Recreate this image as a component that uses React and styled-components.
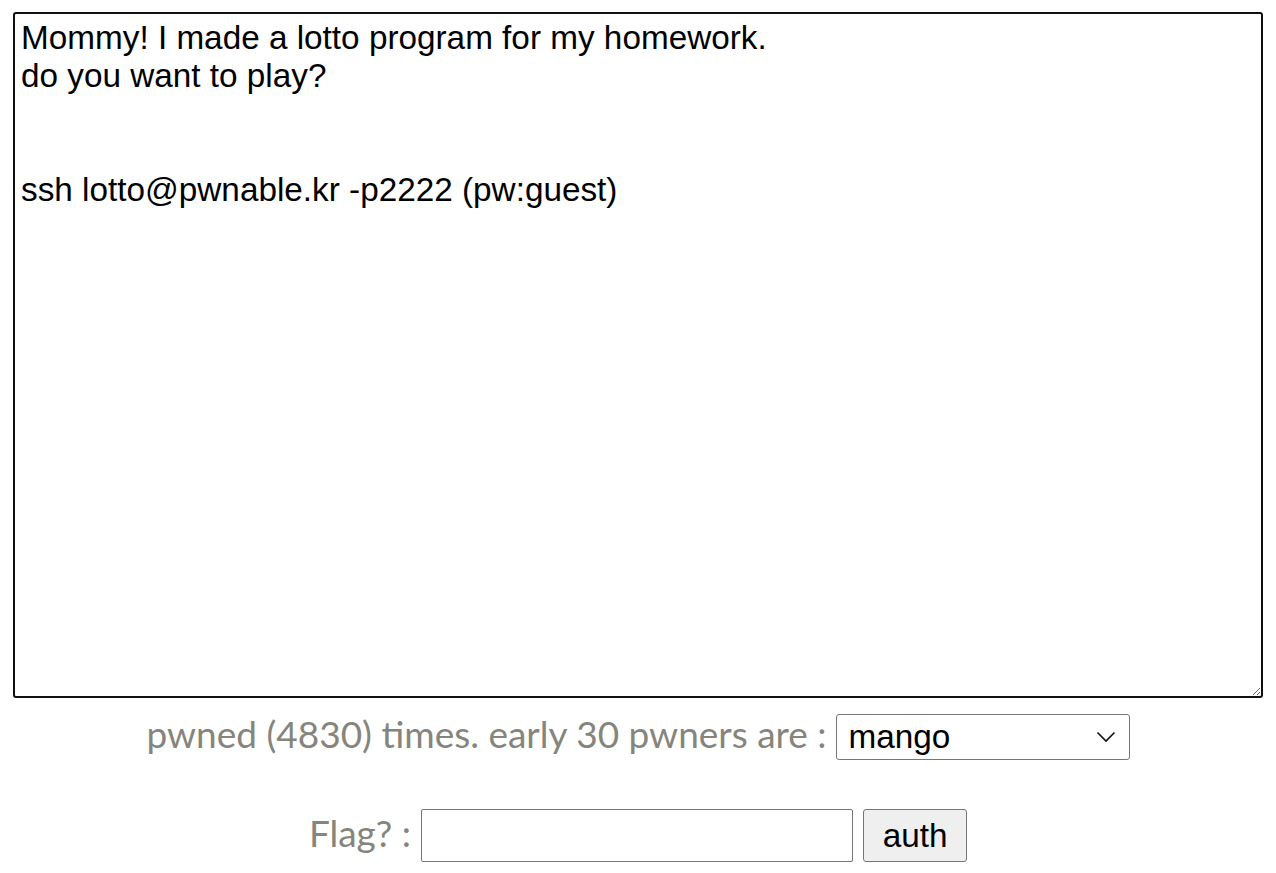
import React from 'react';
import styled, { createGlobalStyle } from 'styled-components';

const GlobalStyle = createGlobalStyle`
  body {
    margin: 0;
    background: #ffffff;
    font-family: "Liberation Sans", Arial, sans-serif;
  }
`;

const Page = styled.div`
  display: flex;
  flex-direction: column;
  align-items: center;
  padding: 12px 13px 0 13px;
`;

const Description = styled.textarea`
  box-sizing: border-box;
  width: 1250px;
  height: 686px;
  margin: 0;
  padding: 5px 6px;
  border: 2px solid #111;
  border-radius: 3px;
  outline: none;
  font-family: "Liberation Sans", Arial, sans-serif;
  font-size: 33.3px;
  line-height: 38px;
  color: #000;
  background: #fff;
`;

const Row = styled.div`
  display: flex;
  align-items: center;
  justify-content: center;
  gap: ${(p) => p.gap || 9}px;
  margin-top: ${(p) => p.top}px;
`;

const Label = styled.span`
  font-family: Lato, "Open Sans", sans-serif;
  font-size: 37px;
  color: #86857c;
  white-space: pre;
  margin-bottom: 6px;
`;

const SelectWrap = styled.div`
  position: relative;
  width: 294px;
  height: 46px;
`;

const Select = styled.select`
  appearance: none;
  box-sizing: border-box;
  width: 100%;
  height: 100%;
  margin: 0;
  padding: 0 40px 0 12px;
  border: 1px solid #767676;
  border-radius: 3px;
  background: #fff;
  font-family: "Liberation Sans", Arial, sans-serif;
  font-size: 33.3px;
  color: #000;
  outline: none;
`;

const Chevron = styled.svg`
  position: absolute;
  right: 14px;
  top: 17px;
  pointer-events: none;
`;

const FlagInput = styled.input`
  box-sizing: border-box;
  width: 432px;
  height: 53px;
  margin: 0;
  padding: 0 6px;
  border: 1px solid #767676;
  border-radius: 2px;
  font-family: "Liberation Sans", Arial, sans-serif;
  font-size: 33.3px;
  outline: none;
`;

const AuthButton = styled.button`
  box-sizing: border-box;
  width: 104px;
  height: 53px;
  margin: 0;
  padding: 0;
  border: 1px solid #767676;
  border-radius: 3px;
  background: #efefef;
  font-family: "Liberation Sans", Arial, sans-serif;
  font-size: 33.3px;
  color: #000;
`;

const text = `Mommy! I made a lotto program for my homework.
do you want to play?


ssh lotto@pwnable.kr -p2222 (pw:guest)`;

export default function App() {
  return (
    <>
      <GlobalStyle />
      <Page>
        <Description defaultValue={text} />
        <Row top={13}>
          <Label>pwned (4830) times. early 30 pwners are :</Label>
          <SelectWrap>
            <Select defaultValue="mango">
              <option value="mango">mango</option>
            </Select>
            <Chevron width="20" height="12" viewBox="0 0 20 12">
              <path d="M1.5 1.5 L10 10 L18.5 1.5" fill="none" stroke="#111" strokeWidth="1.6" />
            </Chevron>
          </SelectWrap>
        </Row>
        <Row top={47} gap={10}>
          <Label>Flag? :</Label>
          <FlagInput type="text" />
          <AuthButton>auth</AuthButton>
        </Row>
      </Page>
    </>
  );
}
